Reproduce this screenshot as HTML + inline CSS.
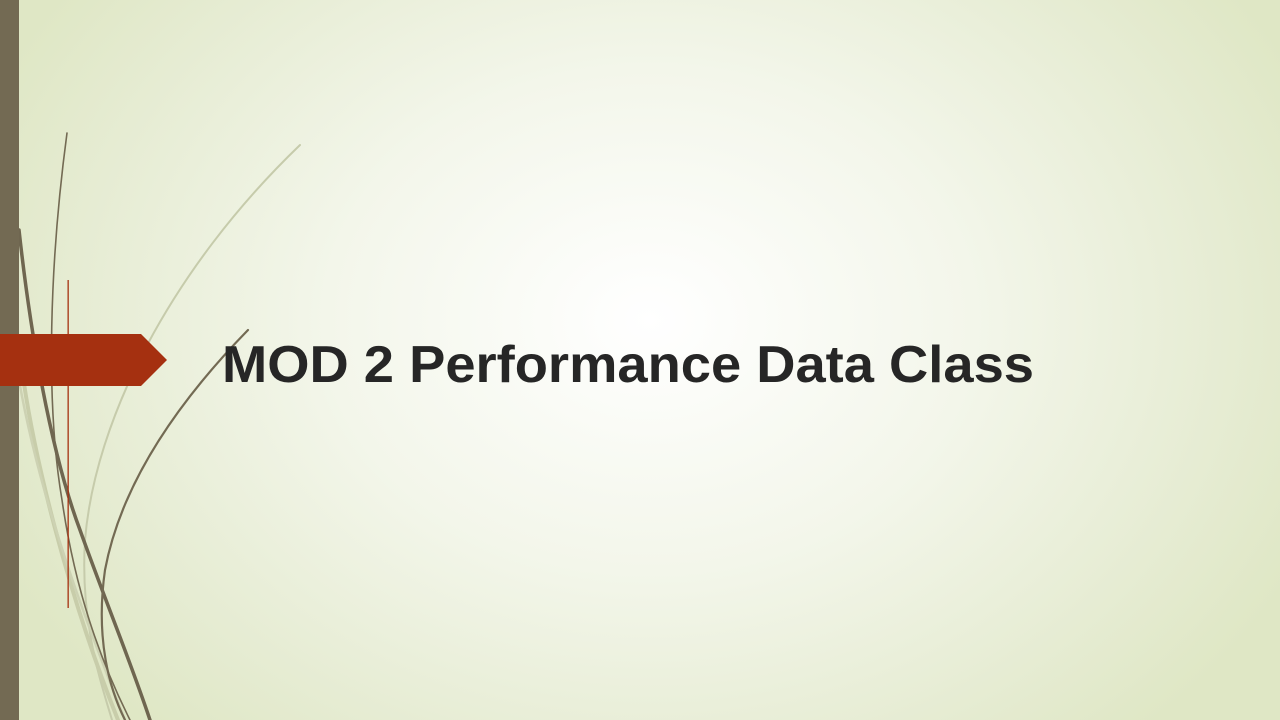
<!DOCTYPE html>
<html><head><style>
html,body{margin:0;padding:0;}
body{width:1280px;height:720px;overflow:hidden;position:relative;
background:radial-gradient(ellipse 720px 560px at 650px 320px,#ffffff 0%,#f3f6ea 45%,#e6ecd3 80%,#dfe7c5 100%);}
svg{position:absolute;left:0;top:0;}
</style></head><body>
<svg width="1280" height="720" viewBox="0 0 1280 720">
<g fill="none" stroke-linecap="round">
<path d="M300,145 C170,270 95,420 85,540 C80,620 100,680 112,720" stroke="#c6cbab" stroke-width="2"/>
<path d="M19,345 C30,450 70,600 118,720" stroke="#c8cdaa" stroke-width="4"/>
<path d="M19,380 C40,500 85,620 125,720" stroke="#cdd2b3" stroke-width="2.5"/>
<path d="M67,133 C50,260 45,400 62,500 C75,590 100,660 130,720" stroke="#736a53" stroke-width="1.6"/>
<path d="M19,230 C30,330 50,450 80,530 C105,600 130,660 150,720" stroke="#6f6650" stroke-width="3.5"/>
<path d="M248,330 C170,410 120,490 105,570 C95,640 110,690 125,720" stroke="#736a53" stroke-width="2.2"/>
</g>
<rect x="0" y="0" width="19" height="720" fill="#736a53"/>
<rect x="67.5" y="280" width="1.3" height="328" fill="#a53010"/>
<polygon points="0,334 141,334 167,360 141,386 0,386" fill="#a53010"/>
<text x="222" y="382" textLength="812" lengthAdjust="spacingAndGlyphs" font-family="Liberation Sans, sans-serif" font-weight="bold" font-size="52" fill="#262626">MOD 2 Performance Data Class</text>
</svg>
</body></html>
